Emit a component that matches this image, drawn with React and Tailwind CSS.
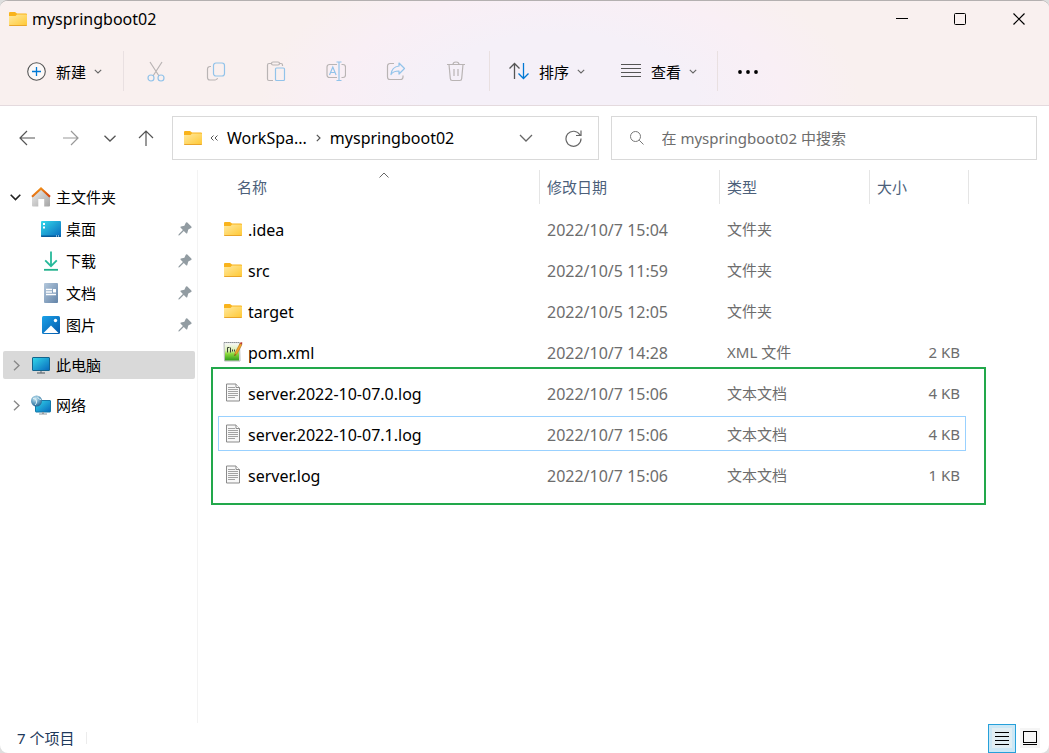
import React, { useState } from 'react';

const files = [
  { name: '.idea', date: '2022/10/7 15:04', type: '文件夹', size: '', icon: 'folder' },
  { name: 'src', date: '2022/10/5 11:59', type: '文件夹', size: '', icon: 'folder' },
  { name: 'target', date: '2022/10/5 12:05', type: '文件夹', size: '', icon: 'folder' },
  { name: 'pom.xml', date: '2022/10/7 14:28', type: 'XML 文件', size: '2 KB', icon: 'xml' },
  { name: 'server.2022-10-07.0.log', date: '2022/10/7 15:06', type: '文本文档', size: '4 KB', icon: 'log' },
  { name: 'server.2022-10-07.1.log', date: '2022/10/7 15:06', type: '文本文档', size: '4 KB', icon: 'log' },
  { name: 'server.log', date: '2022/10/7 15:06', type: '文本文档', size: '1 KB', icon: 'log' },
];

const FolderIcon = () => (
  <svg width="18" height="14" viewBox="0 0 18 14" className="shrink-0">
    <defs>
      <linearGradient id="folder" x1="0" y1="0" x2="1" y2="1">
        <stop offset="0" stopColor="#ffe9a0" />
        <stop offset="1" stopColor="#ffc937" />
      </linearGradient>
    </defs>
    <path d="M0 1a1 1 0 0 1 1-1h5l2 1.500h9a1 1 0 0 1 1 1V6H0z" fill="#f9b31b" />
    <path d="M0 4h6.500l1.500-1.500h9.500l.5.500v10H0z" fill="url(#folder)" />
    <path d="M0 13h18v.300a.700.700 0 0 1-.700.700H.7a.700.700 0 0 1-.700-.700z" fill="#e9a52a" />
  </svg>
);

const XmlIcon = () => (
  <svg width="20" height="21" viewBox="0 0 20 21" className="shrink-0">
    <defs>
      <linearGradient id="xml" x1="0" y1="0" x2="0" y2="1">
        <stop offset="0" stopColor="#f4f7ee" />
        <stop offset=".4" stopColor="#d9f0b0" />
        <stop offset=".6" stopColor="#8ad83a" />
        <stop offset="1" stopColor="#2f9c1c" />
      </linearGradient>
    </defs>
    <path d="M1 1.500h15.500l.5 18.500H1.500z" fill="#f0f2f0" stroke="#b4b8b6" />
    <path d="M2 3h14v16.500H2z" fill="url(#xml)" />
    <path d="M1 1.500h15" stroke="#8d9298" strokeDasharray="1 1" />
    <path d="M4.500 11.500V6.500M7.500 11.500V6.500M4.500 6.500h2M9.500 8.500v2M11.500 8.500v2" stroke="#394235" />
    <path d="M11.500 15l1-4L17 2.500l2 1-4.500 8.500z" fill="#f3a62b" stroke="#ad6a18" strokeWidth=".6" />
    <path d="M17 2.500l.8-1.500 1.700.8-.700 1.700z" fill="#b93931" />
    <path d="M11.500 15l.4-1.800 1 .5z" fill="#4b3b22" />
  </svg>
);

const LogIcon = () => (
  <svg width="16" height="19" viewBox="0 0 16 19" className="shrink-0">
    <path d="M1.500 1h9.500l3.500 3.500V18h-13z" fill="#f8f8f8" stroke="#8b8b8b" />
    <path d="M11 1v3.500h3.500" fill="#fff" stroke="#8b8b8b" />
    <path d="M3 4.500h7M3 6.500h10M3 8.500h10M3 10.500h10M3 12.500h10M3 14.500h7" stroke="#a3a3a3" />
  </svg>
);

const fileIcons = { folder: FolderIcon, xml: XmlIcon, log: LogIcon };

const ChevronDown = () => (
  <svg width="8" height="5" viewBox="0 0 8 5" fill="none" className="shrink-0"><path d="M.8.8 4 4 7.200.8" stroke="#666" strokeWidth="1.100" /></svg>
);

const ChevronRight = () => (
  <svg width="7" height="11" viewBox="0 0 7 11" fill="none"><path d="M1 .8l5 4.700-5 4.700" stroke="#888" strokeWidth="1.400" /></svg>
);

const HomeIcon = () => (
  <svg width="20" height="20" viewBox="0 0 20 20">
    <defs>
      <linearGradient id="wall" x1="0" y1="0" x2="1" y2="1"><stop offset="0" stopColor="#f0f0f0" /><stop offset="1" stopColor="#a4a4a4" /></linearGradient>
      <linearGradient id="roof" x1="0" y1="0" x2="1" y2="1"><stop offset="0" stopColor="#f7a11c" /><stop offset="1" stopColor="#d13f0b" /></linearGradient>
    </defs>
    <path d="M1 9 10 1.500 19 9v9.500a1 1 0 0 1-1 1h-4.800V12H7.300v7.500H2a1 1 0 0 1-1-1z" fill="url(#wall)" />
    <path d="M1 9.700 10 1.500l9 8.200" fill="none" stroke="url(#roof)" strokeWidth="2.200" />
  </svg>
);

const DesktopIcon = () => (
  <svg width="20" height="16" viewBox="0 0 20 16">
    <defs>
      <linearGradient id="screen" x1="0" y1="0" x2="1" y2="1"><stop offset="0" stopColor="#34d9ea" /><stop offset="1" stopColor="#0768bd" /></linearGradient>
    </defs>
    <rect width="20" height="16" rx="1" fill="url(#screen)" />
    <path d="M2 2h2v2H2zM2 5.500h2v2H2z" fill="#fff" />
    <path d="M0 14.500h20v.500a1 1 0 0 1-1 1H1a1 1 0 0 1-1-1z" fill="#075a9a" />
    <path d="M15 15h1M17 15h1" stroke="#fff" />
  </svg>
);

const DownloadIcon = () => (
  <svg width="16" height="20" viewBox="0 0 16 20" fill="none" strokeWidth="1.800">
    <path d="M8 .5V15M2.200 9.300 8 15.200l5.800-5.900" stroke="#26b99a" />
    <path d="M1 18.800h14" stroke="#20b18b" />
  </svg>
);

const DocumentIcon = () => (
  <svg width="14" height="20" viewBox="0 0 14 20">
    <defs>
      <linearGradient id="doc" x1="0" y1="0" x2="1" y2="1"><stop offset="0" stopColor="#b4c8dc" /><stop offset="1" stopColor="#6283a8" /></linearGradient>
    </defs>
    <rect width="14" height="20" rx="1" fill="url(#doc)" />
    <path d="M2 6.500h6M2 9h6M2 11.500h10" stroke="#fff" strokeWidth="1.300" />
    <path d="M9 6h3v3.500H9z" fill="#fff" />
  </svg>
);

const PictureIcon = () => (
  <svg width="18" height="18" viewBox="0 0 18 18">
    <defs>
      <linearGradient id="pic" x1="0" y1="0" x2="1" y2="1"><stop offset="0" stopColor="#1ba2e8" /><stop offset="1" stopColor="#0459ac" /></linearGradient>
    </defs>
    <rect width="18" height="18" rx="1.500" fill="url(#pic)" />
    <circle cx="13.500" cy="4.500" r="1.700" fill="#fff" />
    <path d="M1.500 17 9 9.500l7.500 7.500z" fill="#fff" />
  </svg>
);

const ComputerIcon = () => (
  <svg width="18" height="17" viewBox="0 0 18 17">
    <rect x=".5" y=".5" width="17" height="13" rx=".5" fill="url(#screen)" stroke="#14648d" />
    <path d="M8 14h2v2H8z" fill="#9aa4aa" />
    <path d="M5 16h8" stroke="#616970" strokeWidth="1.200" />
  </svg>
);

const NetworkIcon = () => (
  <svg width="20" height="20" viewBox="0 0 20 20">
    <defs>
      <radialGradient id="globe" cx=".4" cy=".3" r=".7"><stop offset="0" stopColor="#d2ecf5" /><stop offset=".5" stopColor="#6fa9c9" /><stop offset="1" stopColor="#286894" /></radialGradient>
    </defs>
    <rect x="4.500" y="5.500" width="15" height="11.500" rx=".5" fill="url(#screen)" stroke="#1578a8" />
    <path d="M11 17h2v2h-2z" fill="#9aa4aa" />
    <path d="M8 19h8" stroke="#8e989f" />
    <circle cx="5.500" cy="6" r="5.500" fill="url(#globe)" />
    <path d="M2 3.500c2 0 3 1 3.500 2.500S5 9 4 10M7 1.500c-.500 1.500.5 2.500 3 3" fill="none" stroke="#e3f2f7" />
  </svg>
);

const PinIcon = () => (
  <svg width="14" height="14" viewBox="0 0 14 14" className="ml-auto">
    <path d="M7.800.8c.500-.700 1-.700 1.500-.200l4 4c.500.500.4 1-.200 1.500L10.300 7.600 9.300 11c-.200.700-.700.800-1.200.300L5.800 9 1.500 13.200.3 13.500l.4-1.300L4.900 8 2.700 5.800c-.500-.500-.400-1 .3-1.200L6.400 3.700z" fill="#929ca2" />
  </svg>
);

const quickAccess = [
  { label: '桌面', Icon: DesktopIcon },
  { label: '下载', Icon: DownloadIcon },
  { label: '文档', Icon: DocumentIcon },
  { label: '图片', Icon: PictureIcon },
];

const actions = [
  {
    label: '剪切',
    icon: (
      <>
        <path d="M4 1l9 14M16 1 7 15" stroke="#b9b4b4" />
        <circle cx="5" cy="17" r="3" stroke="#92c3ea" />
        <circle cx="15" cy="17" r="3" stroke="#92c3ea" />
      </>
    ),
  },
  {
    label: '复制',
    icon: (
      <>
        <path d="M5 5.500H4A2.500 2.500 0 0 0 1.500 8v8.500A2.500 2.500 0 0 0 4 19h5a2.500 2.500 0 0 0 2.500-2" stroke="#b9b4b4" />
        <rect x="7.500" y="2" width="11" height="13" rx="2.500" stroke="#92c3ea" />
      </>
    ),
  },
  {
    label: '粘贴',
    icon: (
      <>
        <path d="M6 2.500H3A1.500 1.500 0 0 0 1.500 4v14A1.500 1.500 0 0 0 3 19.500h4M13 2.500h2A1.500 1.500 0 0 1 16.500 4v1" stroke="#b9b4b4" />
        <rect x="5.500" y="1" width="8" height="3" rx="1.500" stroke="#b9b4b4" />
        <rect x="9.500" y="7" width="9" height="12.500" rx="1" stroke="#92c3ea" />
      </>
    ),
  },
  {
    label: '重命名',
    icon: (
      <>
        <path d="M11 3.500H3.500A2.500 2.500 0 0 0 1 6v8a2.500 2.500 0 0 0 2.500 2.500H11M15.500 3.500H17A2.500 2.500 0 0 1 19.500 6v8a2.500 2.500 0 0 1-2.500 2.500h-1.500" stroke="#b9b4b4" />
        <path d="M10.500 1h5M13 1v18.500M10.500 19.500h5M3.500 14 6.800 6l3.300 8M4.600 11.500H9" stroke="#92c3ea" />
      </>
    ),
  },
  {
    label: '共享',
    icon: (
      <>
        <path d="M8 2.500H4A2.500 2.500 0 0 0 1.500 5v11A2.500 2.500 0 0 0 4 18.500h10.500A2.500 2.500 0 0 0 17 16v-1.500" stroke="#b9b4b4" />
        <path d="M13 2l5.500 5.500L13 13V10c-4 0-6.500 1-8 3.500C5.500 8.500 8.500 5.500 13 5z" stroke="#92c3ea" strokeLinejoin="round" />
      </>
    ),
  },
  {
    label: '删除',
    icon: (
      <path d="M1 3.500h18M3 3.500l1.300 14A2 2 0 0 0 6.200 19.500h7.600a2 2 0 0 0 1.900-2L17 3.500M7 3.500a3 2.500 0 0 1 6 0M8 8v7M12 8v7" stroke="#b9b4b4" />
    ),
  },
];

const Divider = () => <span className="h-10 w-px bg-[#e9e0e1]"></span>;

export default function App() {
  const [selected, setSelected] = useState('server.2022-10-07.1.log');
  const [query, setQuery] = useState('');

  return (
    <div className="min-h-screen bg-[#dedede] font-['Noto_Sans','Noto_Sans_CJK_SC',sans-serif] text-[15px] text-black">
      <div className="flex min-h-screen flex-col overflow-hidden rounded-lg border-t border-[#b4b0b0] bg-white">
        <header className="border-b border-[#e4dade] bg-[#f9f0ef] bg-[radial-gradient(ellipse_300px_150px_at_560px_100px,#f5f0f8_0%,#f5f0f8_45%,#f9eff5_75%,#f9f0ef_100%)]">
          <div className="flex h-9 items-center pl-[9px]">
            <FolderIcon />
            <h1 className="ml-[5px] text-base">myspringboot02</h1>
            <div className="ml-auto flex h-full">
              <button aria-label="最小化" className="flex w-[58px] items-center justify-center"><svg width="12" height="12" viewBox="0 0 12 12"><path d="M0 5.500h12" stroke="#000" /></svg></button>
              <button aria-label="最大化" className="flex w-[58px] items-center justify-center"><svg width="12" height="12" viewBox="0 0 12 12" fill="none"><rect x=".5" y=".5" width="11" height="11" rx="1" stroke="#000" /></svg></button>
              <button aria-label="关闭" className="flex w-[60px] items-center justify-center"><svg width="12" height="12" viewBox="0 0 12 12"><path d="M.5.500l11 11M11.500.500l-11 11" stroke="#000" strokeWidth="1.200" /></svg></button>
            </div>
          </div>

          <div className="flex h-[68px] items-center">
            <button className="flex items-center pr-[21px] pl-[27px]">
              <svg width="19" height="19" viewBox="0 0 19 19" fill="none">
                <circle cx="9.500" cy="9.500" r="8.800" fill="#fff" fillOpacity=".5" stroke="#555" strokeWidth="1.100" />
                <path d="M9.500 5v9M5 9.500h9" stroke="#0078d4" strokeWidth="1.300" />
              </svg>
              <span className="mr-2 ml-[10px] pt-0.5">新建</span>
              <ChevronDown />
            </button>
            <Divider />
            <div className="flex pr-[3px] pl-0.5">
              {actions.map(a => (
                <button key={a.label} aria-label={a.label} disabled className="flex w-[60px] justify-center">
                  <svg width="20" height="21" viewBox="0 0 20 21" fill="none" strokeWidth="1.200">{a.icon}</svg>
                </button>
              ))}
            </div>
            <Divider />
            <button className="flex items-center px-[19px]">
              <svg width="20" height="18" viewBox="0 0 20 18" fill="none" strokeWidth="1.300">
                <path d="M5.500 17V1.500M.5 6.500l5-5 5 5" stroke="#555" />
                <path d="M14.500 1v15.500M9.500 11.500l5 5 5-5" stroke="#0078d4" />
              </svg>
              <span className="mr-2 ml-[10px] pt-0.5">排序</span>
              <ChevronDown />
            </button>
            <button className="flex items-center pr-5 pl-[17px]">
              <svg width="20" height="14" viewBox="0 0 20 14"><path d="M0 .5h20M0 4.500h20M0 8.500h20M0 12.500h20" stroke="#555" /></svg>
              <span className="mr-2 ml-[10px] pt-0.5">查看</span>
              <ChevronDown />
            </button>
            <Divider />
            <button aria-label="更多" className="px-5 pt-0.5">
              <svg width="20" height="4" viewBox="0 0 20 4"><circle cx="2" cy="2" r="1.900" /><circle cx="10" cy="2" r="1.900" /><circle cx="18" cy="2" r="1.900" /></svg>
            </button>
          </div>
        </header>

        <nav className="flex items-center py-[10px] pr-3 pl-[19px]">
          <div className="flex w-[153px] shrink-0 items-center">
            <button aria-label="后退" className="mr-7"><svg width="16" height="16" viewBox="0 0 16 16" fill="none"><path d="M16 8H1M8 1 1 8l7 7" stroke="#555" strokeWidth="1.200" /></svg></button>
            <button aria-label="前进" className="mr-[25px]"><svg width="16" height="16" viewBox="0 0 16 16" fill="none"><path d="M0 8h15M8 1l7 7-7 7" stroke="#999" strokeWidth="1.200" /></svg></button>
            <button aria-label="最近的位置" className="mr-[22px]"><svg width="12" height="7" viewBox="0 0 12 7" fill="none"><path d="M.5.8 6 6 11.500.8" stroke="#555" strokeWidth="1.300" /></svg></button>
            <button aria-label="上移"><svg width="16" height="16" viewBox="0 0 16 16" fill="none"><path d="M8 16V1M1 8l7-7 7 7" stroke="#555" strokeWidth="1.200" /></svg></button>
          </div>
          <div className="mr-3 flex h-11 flex-1 items-center border border-[#d9d9d9] pl-[11px] text-base">
            <FolderIcon />
            <svg width="8" height="6" viewBox="0 0 8 6" fill="none" className="ml-2"><path d="M3.500.5 1 3l2.500 2.500M7.500.5 5 3l2.500 2.500" stroke="#555" /></svg>
            <a href="#workspace" className="ml-[9px]">WorkSpa...</a>
            <svg width="5" height="8" viewBox="0 0 5 8" fill="none" className="mx-[9px]"><path d="M.8.800 4 4 .8 7.200" stroke="#555" strokeWidth="1.200" /></svg>
            <a href="#myspringboot02">myspringboot02</a>
            <button aria-label="历史记录" className="ml-auto"><svg width="14" height="8" viewBox="0 0 14 8" fill="none"><path d="M1 1l6 6 6-6" stroke="#666" strokeWidth="1.300" /></svg></button>
            <button aria-label="刷新" className="mr-4 ml-8">
              <svg width="17" height="17" viewBox="0 0 17 17" fill="none" stroke="#666" strokeWidth="1.200"><path d="M15 5A7.500 7.500 0 1 0 16 8.500M16 .5V5.500h-5" /></svg>
            </button>
          </div>
          <label className="flex h-11 flex-1 items-center border border-[#d9d9d9] pl-[11px]">
            <svg width="14" height="14" viewBox="0 0 14 14" fill="none" stroke="#777" className="ml-[7px]"><circle cx="5.500" cy="5.500" r="5" /><path d="M9.200 9.200l4.300 4.300" /></svg>
            <input type="text" aria-label="搜索" value={query} onChange={(e) => setQuery(e.target.value)} placeholder="在 myspringboot02 中搜索" className="ml-[18px] min-w-0 flex-1 outline-none placeholder:text-[#6d6d6d]" />
          </label>
        </nav>

        <div className="flex flex-1">
          <aside className="w-[198px] shrink-0 border-r border-[#f3f3f3] pt-[11px]">
            <a href="#home" className="flex h-8 items-center pl-[10px]">
              <svg width="11" height="7" viewBox="0 0 11 7" fill="none"><path d="M.7.800 5.500 5.600 10.300.8" stroke="#222" strokeWidth="1.600" /></svg>
              <span className="mr-[5px] ml-[10px]"><HomeIcon /></span>
              主文件夹
            </a>
            {quickAccess.map(({ label, Icon }) => (
              <a key={label} href={`#${label}`} className="flex h-8 items-center pr-[5px] pl-[41px]">
                <span className="mr-[5px] flex w-5 justify-center"><Icon /></span>
                {label}
                <PinIcon />
              </a>
            ))}
            <a href="#pc" className="mt-[10px] mr-0.5 ml-[3px] flex h-7 items-center rounded-xs bg-[#d9d9d9] pl-[10px]">
              <ChevronRight />
              <span className="mr-[5px] ml-[11px] flex w-5 justify-center"><ComputerIcon /></span>
              此电脑
            </a>
            <a href="#network" className="mt-[10px] flex h-8 items-center pl-[13px]">
              <ChevronRight />
              <span className="mr-[5px] ml-[11px]"><NetworkIcon /></span>
              网络
            </a>
          </aside>

          <main className="min-w-0 flex-1 pr-20 pl-[17px]">
            <div className="relative">
              <table className="w-full table-fixed border-collapse">
                <thead>
                  <tr className="text-left text-[#4c607a]">
                    <th className="p-0 pb-1 font-normal">
                      <div className="relative flex h-[34px] items-center pl-[22px]">
                        名称
                        <svg width="10" height="6" viewBox="0 0 10 6" fill="none" className="absolute top-0.5 left-1/2 ml-0.5"><path d="M.5 5.500 5 1l4.500 4.500" stroke="#666" /></svg>
                      </div>
                    </th>
                    <th className="w-[180px] p-0 pb-1 font-normal"><div className="flex h-[34px] items-center border-l border-[#e5e5e5] pl-[7px]">修改日期</div></th>
                    <th className="w-[150px] p-0 pb-1 font-normal"><div className="flex h-[34px] items-center border-l border-[#e5e5e5] pl-[7px]">类型</div></th>
                    <th className="w-[100px] p-0 pb-1 font-normal"><div className="flex h-[34px] items-center border-x border-[#e5e5e5] pl-[7px]">大小</div></th>
                  </tr>
                </thead>
                <tbody>
                  {files.map(file => {
                    const Icon = fileIcons[file.icon];
                    return (
                      <tr key={file.name} onClick={() => setSelected(file.name)} className={`h-[41px] text-[#6d6d6d] ${selected === file.name ? 'rounded-xs outline outline-[#99d1ff] -outline-offset-4' : ''}`}>
                        <td className="p-0 pt-0.5">
                          <div className="flex items-center pl-2 text-base text-black">
                            <span className="mr-[5px] mb-0.5 flex w-5 justify-center"><Icon /></span>
                            {file.name}
                          </div>
                        </td>
                        <td className="p-0 pt-0.5 pl-2 text-base">{file.date}</td>
                        <td className="p-0 pt-0.5 pl-2">{file.type}</td>
                        <td className="p-0 pt-0.5 pr-[9px] text-right">{file.size}</td>
                      </tr>
                    );
                  })}
                </tbody>
              </table>
              {/* frame around the rolled log files */}
              <div className="pointer-events-none absolute -right-[17px] -bottom-[10px] -left-1 h-[138px] border-2 border-[#22a84b]"></div>
            </div>
          </main>
        </div>

        <footer className="flex h-[30px] items-center pl-[17px] text-[#1e395b]">
          <span>7 个项目</span>
          <span className="ml-3 h-3 w-px bg-[#ececec]"></span>
          <div className="ml-auto flex h-full items-center pr-[9px]">
            <button aria-label="详细信息" className="mr-1 flex h-[29px] w-7 items-center justify-center border border-[#26a0da] bg-[#cce8f6]">
              <span className="flex h-5 w-5 items-center justify-center bg-[#e2eef3]">
                <svg width="14" height="14" viewBox="0 0 14 14"><path d="M0 1.500h14M0 5.500h14M0 9.500h14M0 13.500h14" stroke="#000" /></svg>
              </span>
            </button>
            <button aria-label="大图标" className="flex h-5 w-5 items-center justify-center bg-[#f5f5f5]">
              <svg width="14" height="14" viewBox="0 0 14 14" fill="none"><rect x=".5" y=".5" width="13" height="11" stroke="#000" /><path d="M0 13.500h14" stroke="#000" /></svg>
            </button>
          </div>
        </footer>
      </div>
    </div>
  );
}
